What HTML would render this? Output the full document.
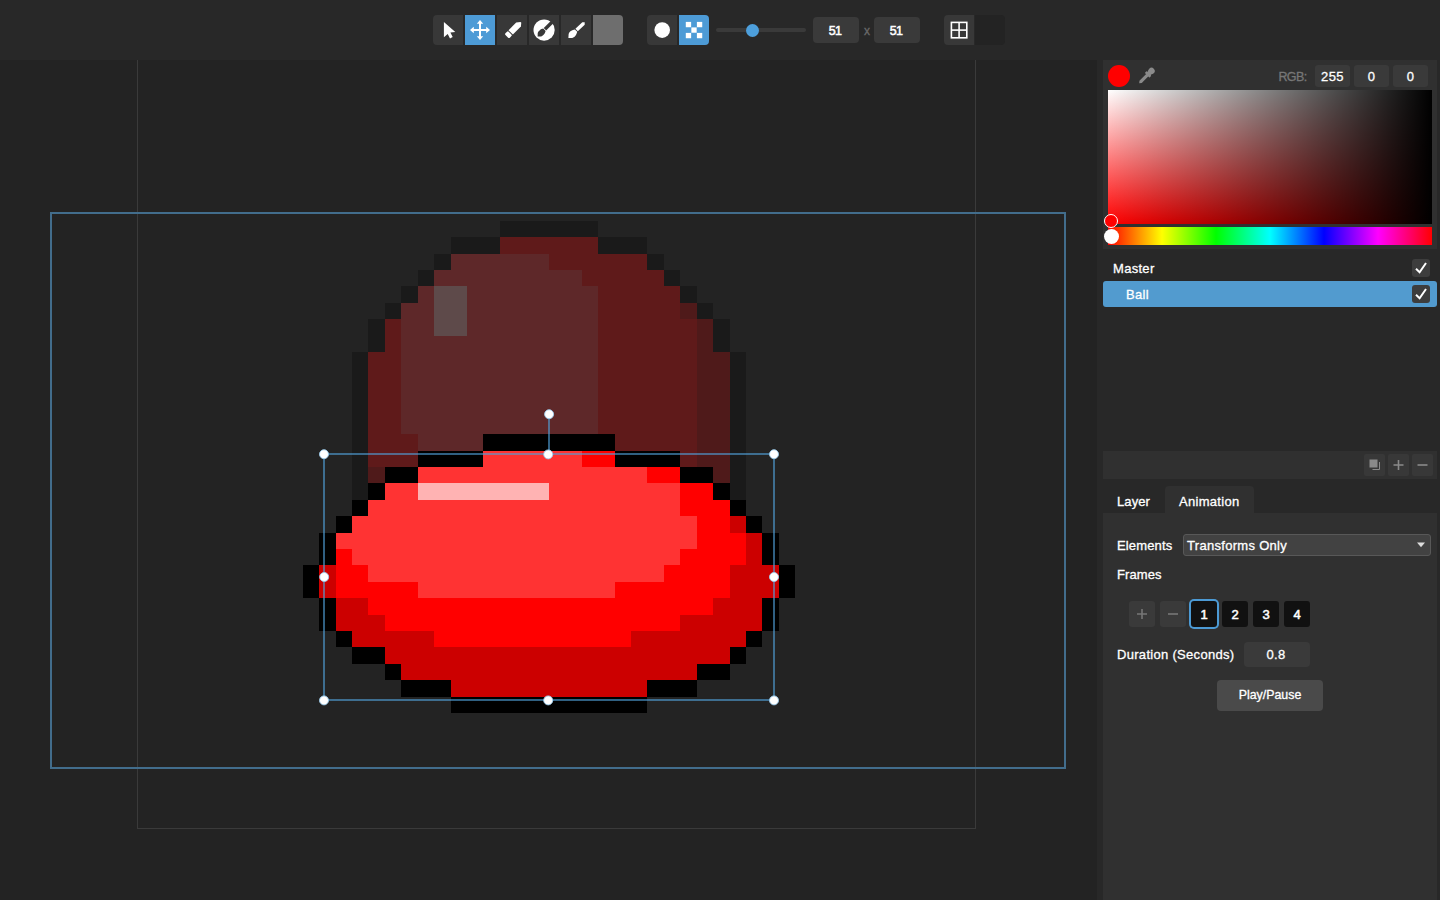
<!DOCTYPE html>
<html lang="en">
<head>
<meta charset="utf-8">
<title>Pixel Editor</title>
<style>
*{box-sizing:border-box;margin:0;padding:0}
html,body{width:1440px;height:900px;overflow:hidden;background:#282828}
body{position:relative;font-family:"Liberation Sans",sans-serif;font-size:13px;color:#fff;-webkit-font-smoothing:antialiased}
.abs{position:absolute}
#stage{position:absolute;left:0;top:60px;width:1097px;height:840px;background:#232323;overflow:hidden}
#stage svg{position:absolute;left:0;top:0}
/* top toolbar */
.tb{position:absolute;top:15px;width:30px;height:30px;background:#383838}
.tb.on{background:#4d9bd6}
.tb svg{position:absolute;left:0;top:0}
.num{position:absolute;top:17px;height:26px;width:46px;background:#3a3a3a;border-radius:4px;text-align:center;line-height:28px;font-size:12.5px;letter-spacing:-0.6px;padding-right:2px;color:#fff;-webkit-text-stroke:0.5px #fff}
/* right panel */
.pn{position:absolute;left:1103px;width:334px;background:#303030}
.rgb{position:absolute;top:65px;width:35px;height:22px;background:#3a3a3a;border-radius:3px;text-align:center;line-height:23px;font-size:13px;letter-spacing:0.4px;color:#fff;-webkit-text-stroke:0.3px #fff}
.cb{position:absolute;left:1412px;width:18px;height:18px;background:#3d3d3d;border-radius:3px}
.lb{position:absolute;line-height:16px;white-space:nowrap;letter-spacing:0.3px;-webkit-text-stroke:0.3px currentColor}
.sb{position:absolute;top:454px;width:21px;height:22px;background:#383838;border-radius:2px}
.fb{position:absolute;top:601px;width:26px;height:26px;border-radius:3px;background:#111;text-align:center;line-height:27.5px;font-size:13px;color:#fff;-webkit-text-stroke:0.55px #fff}
.fb svg,.sb svg,.cb svg{display:block}
.fb.dis{background:#3a3a3a;color:#777}
</style>
</head>
<body>

<!-- ======= canvas stage ======= -->
<div id="stage">
<svg width="1097" height="840" viewBox="0 60 1097 840">
  <g shape-rendering="crispEdges">
  <rect x="137.5" y="-9.5" width="838" height="838" fill="none" stroke="#3a3a3a" stroke-width="1"/>
<rect x="500" y="221" width="98" height="16" fill="#1a1a1a"/>
<rect x="451" y="237" width="49" height="17" fill="#1a1a1a"/>
<rect x="500" y="237" width="98" height="17" fill="#5f1a1a"/>
<rect x="598" y="237" width="49" height="17" fill="#1a1a1a"/>
<rect x="434" y="254" width="17" height="16" fill="#1a1a1a"/>
<rect x="451" y="254" width="98" height="16" fill="#5e2829"/>
<rect x="549" y="254" width="98" height="16" fill="#5f1a1a"/>
<rect x="647" y="254" width="17" height="16" fill="#1a1a1a"/>
<rect x="418" y="270" width="16" height="16" fill="#1a1a1a"/>
<rect x="434" y="270" width="148" height="16" fill="#5e2829"/>
<rect x="582" y="270" width="82" height="16" fill="#5f1a1a"/>
<rect x="664" y="270" width="16" height="16" fill="#1a1a1a"/>
<rect x="401" y="286" width="17" height="17" fill="#1a1a1a"/>
<rect x="418" y="286" width="16" height="17" fill="#5e2829"/>
<rect x="434" y="286" width="33" height="17" fill="#5e4a4a"/>
<rect x="467" y="286" width="131" height="17" fill="#5e2829"/>
<rect x="598" y="286" width="82" height="17" fill="#5f1a1a"/>
<rect x="680" y="286" width="17" height="17" fill="#1a1a1a"/>
<rect x="385" y="303" width="16" height="16" fill="#1a1a1a"/>
<rect x="401" y="303" width="33" height="16" fill="#5e2829"/>
<rect x="434" y="303" width="33" height="16" fill="#5e4a4a"/>
<rect x="467" y="303" width="131" height="16" fill="#5e2829"/>
<rect x="598" y="303" width="82" height="16" fill="#5f1a1a"/>
<rect x="680" y="303" width="17" height="16" fill="#4f1a1a"/>
<rect x="697" y="303" width="16" height="16" fill="#1a1a1a"/>
<rect x="368" y="319" width="17" height="17" fill="#1a1a1a"/>
<rect x="385" y="319" width="16" height="17" fill="#5f1a1a"/>
<rect x="401" y="319" width="33" height="17" fill="#5e2829"/>
<rect x="434" y="319" width="33" height="17" fill="#5e4a4a"/>
<rect x="467" y="319" width="131" height="17" fill="#5e2829"/>
<rect x="598" y="319" width="99" height="17" fill="#5f1a1a"/>
<rect x="697" y="319" width="16" height="17" fill="#4f1a1a"/>
<rect x="713" y="319" width="17" height="17" fill="#1a1a1a"/>
<rect x="368" y="336" width="17" height="16" fill="#1a1a1a"/>
<rect x="385" y="336" width="16" height="16" fill="#5f1a1a"/>
<rect x="401" y="336" width="197" height="16" fill="#5e2829"/>
<rect x="598" y="336" width="99" height="16" fill="#5f1a1a"/>
<rect x="697" y="336" width="16" height="16" fill="#4f1a1a"/>
<rect x="713" y="336" width="17" height="16" fill="#1a1a1a"/>
<rect x="352" y="352" width="16" height="16" fill="#1a1a1a"/>
<rect x="368" y="352" width="33" height="16" fill="#5f1a1a"/>
<rect x="401" y="352" width="197" height="16" fill="#5e2829"/>
<rect x="598" y="352" width="99" height="16" fill="#5f1a1a"/>
<rect x="697" y="352" width="33" height="16" fill="#4f1a1a"/>
<rect x="730" y="352" width="16" height="16" fill="#1a1a1a"/>
<rect x="352" y="368" width="16" height="17" fill="#1a1a1a"/>
<rect x="368" y="368" width="33" height="17" fill="#5f1a1a"/>
<rect x="401" y="368" width="197" height="17" fill="#5e2829"/>
<rect x="598" y="368" width="99" height="17" fill="#5f1a1a"/>
<rect x="697" y="368" width="33" height="17" fill="#4f1a1a"/>
<rect x="730" y="368" width="16" height="17" fill="#1a1a1a"/>
<rect x="352" y="385" width="16" height="16" fill="#1a1a1a"/>
<rect x="368" y="385" width="33" height="16" fill="#5f1a1a"/>
<rect x="401" y="385" width="197" height="16" fill="#5e2829"/>
<rect x="598" y="385" width="99" height="16" fill="#5f1a1a"/>
<rect x="697" y="385" width="33" height="16" fill="#4f1a1a"/>
<rect x="730" y="385" width="16" height="16" fill="#1a1a1a"/>
<rect x="352" y="401" width="16" height="17" fill="#1a1a1a"/>
<rect x="368" y="401" width="33" height="17" fill="#5f1a1a"/>
<rect x="401" y="401" width="197" height="17" fill="#5e2829"/>
<rect x="598" y="401" width="99" height="17" fill="#5f1a1a"/>
<rect x="697" y="401" width="33" height="17" fill="#4f1a1a"/>
<rect x="730" y="401" width="16" height="17" fill="#1a1a1a"/>
<rect x="352" y="418" width="16" height="16" fill="#1a1a1a"/>
<rect x="368" y="418" width="33" height="16" fill="#5f1a1a"/>
<rect x="401" y="418" width="197" height="16" fill="#5e2829"/>
<rect x="598" y="418" width="99" height="16" fill="#5f1a1a"/>
<rect x="697" y="418" width="33" height="16" fill="#4f1a1a"/>
<rect x="730" y="418" width="16" height="16" fill="#1a1a1a"/>
<rect x="352" y="434" width="16" height="17" fill="#1a1a1a"/>
<rect x="368" y="434" width="50" height="17" fill="#5f1a1a"/>
<rect x="418" y="434" width="65" height="17" fill="#5e2829"/>
<rect x="483" y="434" width="132" height="17" fill="#000000"/>
<rect x="615" y="434" width="82" height="17" fill="#5f1a1a"/>
<rect x="697" y="434" width="33" height="17" fill="#4f1a1a"/>
<rect x="730" y="434" width="16" height="17" fill="#1a1a1a"/>
<rect x="352" y="451" width="16" height="16" fill="#1a1a1a"/>
<rect x="368" y="451" width="50" height="16" fill="#5f1a1a"/>
<rect x="418" y="451" width="65" height="16" fill="#000000"/>
<rect x="483" y="451" width="99" height="16" fill="#ff3333"/>
<rect x="582" y="451" width="33" height="16" fill="#ff0000"/>
<rect x="615" y="451" width="65" height="16" fill="#000000"/>
<rect x="680" y="451" width="17" height="16" fill="#5f1a1a"/>
<rect x="697" y="451" width="33" height="16" fill="#4f1a1a"/>
<rect x="730" y="451" width="16" height="16" fill="#1a1a1a"/>
<rect x="352" y="467" width="16" height="16" fill="#1a1a1a"/>
<rect x="368" y="467" width="17" height="16" fill="#4f1a1a"/>
<rect x="385" y="467" width="33" height="16" fill="#000000"/>
<rect x="418" y="467" width="229" height="16" fill="#ff3333"/>
<rect x="647" y="467" width="33" height="16" fill="#ff0000"/>
<rect x="680" y="467" width="33" height="16" fill="#000000"/>
<rect x="713" y="467" width="17" height="16" fill="#4f1a1a"/>
<rect x="730" y="467" width="16" height="16" fill="#1a1a1a"/>
<rect x="352" y="483" width="16" height="17" fill="#1a1a1a"/>
<rect x="368" y="483" width="17" height="17" fill="#000000"/>
<rect x="385" y="483" width="33" height="17" fill="#ff3333"/>
<rect x="418" y="483" width="131" height="17" fill="#ffb3b3"/>
<rect x="549" y="483" width="131" height="17" fill="#ff3333"/>
<rect x="680" y="483" width="33" height="17" fill="#ff0000"/>
<rect x="713" y="483" width="17" height="17" fill="#000000"/>
<rect x="730" y="483" width="16" height="17" fill="#1a1a1a"/>
<rect x="352" y="500" width="16" height="16" fill="#000000"/>
<rect x="368" y="500" width="312" height="16" fill="#ff3333"/>
<rect x="680" y="500" width="50" height="16" fill="#ff0000"/>
<rect x="730" y="500" width="16" height="16" fill="#000000"/>
<rect x="336" y="516" width="16" height="17" fill="#000000"/>
<rect x="352" y="516" width="345" height="17" fill="#ff3333"/>
<rect x="697" y="516" width="33" height="17" fill="#ff0000"/>
<rect x="730" y="516" width="16" height="17" fill="#cc0000"/>
<rect x="746" y="516" width="16" height="17" fill="#000000"/>
<rect x="319" y="533" width="17" height="16" fill="#000000"/>
<rect x="336" y="533" width="361" height="16" fill="#ff3333"/>
<rect x="697" y="533" width="49" height="16" fill="#ff0000"/>
<rect x="746" y="533" width="16" height="16" fill="#cc0000"/>
<rect x="762" y="533" width="17" height="16" fill="#000000"/>
<rect x="319" y="549" width="17" height="16" fill="#000000"/>
<rect x="336" y="549" width="16" height="16" fill="#ff0000"/>
<rect x="352" y="549" width="328" height="16" fill="#ff3333"/>
<rect x="680" y="549" width="66" height="16" fill="#ff0000"/>
<rect x="746" y="549" width="16" height="16" fill="#cc0000"/>
<rect x="762" y="549" width="17" height="16" fill="#000000"/>
<rect x="303" y="565" width="16" height="17" fill="#000000"/>
<rect x="319" y="565" width="17" height="17" fill="#cc0000"/>
<rect x="336" y="565" width="32" height="17" fill="#ff0000"/>
<rect x="368" y="565" width="296" height="17" fill="#ff3333"/>
<rect x="664" y="565" width="66" height="17" fill="#ff0000"/>
<rect x="730" y="565" width="49" height="17" fill="#cc0000"/>
<rect x="779" y="565" width="16" height="17" fill="#000000"/>
<rect x="303" y="582" width="16" height="16" fill="#000000"/>
<rect x="319" y="582" width="17" height="16" fill="#cc0000"/>
<rect x="336" y="582" width="82" height="16" fill="#ff0000"/>
<rect x="418" y="582" width="197" height="16" fill="#ff3333"/>
<rect x="615" y="582" width="115" height="16" fill="#ff0000"/>
<rect x="730" y="582" width="49" height="16" fill="#cc0000"/>
<rect x="779" y="582" width="16" height="16" fill="#000000"/>
<rect x="319" y="598" width="17" height="17" fill="#000000"/>
<rect x="336" y="598" width="32" height="17" fill="#cc0000"/>
<rect x="368" y="598" width="345" height="17" fill="#ff0000"/>
<rect x="713" y="598" width="49" height="17" fill="#cc0000"/>
<rect x="762" y="598" width="17" height="17" fill="#000000"/>
<rect x="319" y="615" width="17" height="16" fill="#000000"/>
<rect x="336" y="615" width="49" height="16" fill="#cc0000"/>
<rect x="385" y="615" width="295" height="16" fill="#ff0000"/>
<rect x="680" y="615" width="82" height="16" fill="#cc0000"/>
<rect x="762" y="615" width="17" height="16" fill="#000000"/>
<rect x="336" y="631" width="16" height="16" fill="#000000"/>
<rect x="352" y="631" width="82" height="16" fill="#cc0000"/>
<rect x="434" y="631" width="197" height="16" fill="#ff0000"/>
<rect x="631" y="631" width="115" height="16" fill="#cc0000"/>
<rect x="746" y="631" width="16" height="16" fill="#000000"/>
<rect x="352" y="647" width="33" height="17" fill="#000000"/>
<rect x="385" y="647" width="345" height="17" fill="#cc0000"/>
<rect x="730" y="647" width="16" height="17" fill="#000000"/>
<rect x="385" y="664" width="16" height="16" fill="#000000"/>
<rect x="401" y="664" width="296" height="16" fill="#cc0000"/>
<rect x="697" y="664" width="33" height="16" fill="#000000"/>
<rect x="401" y="680" width="50" height="17" fill="#000000"/>
<rect x="451" y="680" width="196" height="17" fill="#cc0000"/>
<rect x="647" y="680" width="50" height="17" fill="#000000"/>
<rect x="451" y="697" width="196" height="16" fill="#000000"/>
  </g>
  <!-- viewport frame -->
  <rect x="51" y="213" width="1014" height="555" fill="none" stroke="#426d8c" stroke-width="2" shape-rendering="crispEdges"/>
  <!-- transform box -->
  <g stroke="rgba(80,160,216,0.6)" stroke-width="2" fill="none" shape-rendering="crispEdges">
    <rect x="324" y="454" width="450" height="246"/>
    <line x1="549" y1="414" x2="549" y2="453"/>
  </g>
  <g fill="#fff" stroke="#9ccdee" stroke-width="0.9">
    <circle cx="324" cy="454.2" r="4.5"/><circle cx="548.2" cy="454.4" r="4.5"/><circle cx="774" cy="454.2" r="4.5"/>
    <circle cx="324.2" cy="577" r="4.5"/><circle cx="774" cy="577" r="4.5"/>
    <circle cx="324" cy="700.4" r="4.5"/><circle cx="548.2" cy="700.4" r="4.5"/><circle cx="774" cy="700.4" r="4.5"/>
    <circle cx="549.1" cy="414.2" r="4.5"/>
  </g>
</svg>
</div>

<!-- ======= top toolbar ======= -->
<div class="tb" style="left:433px;border-radius:4px 0 0 4px">
  <svg width="30" height="30" viewBox="433 15 30 30"><path d="M443.9 21.9 L443.9 37.3 L447.7 33.9 L450 38.4 L452.7 37 L450.4 32.6 L455.3 32 Z" fill="#fff"/></svg>
</div>
<div class="tb on" style="left:465px">
  <svg width="30" height="30" viewBox="465 15 30 30"><g fill="#fff"><rect x="479" y="22" width="2" height="16"/><rect x="472" y="29" width="16" height="2"/><path d="M480 20 L483.2 23.8 H476.8 Z"/><path d="M480 40 L483.2 36.2 H476.8 Z"/><path d="M470 30 L473.8 26.8 V33.2 Z"/><path d="M490 30 L486.2 26.8 V33.2 Z"/></g></svg>
</div>
<div class="tb" style="left:497px">
  <svg width="30" height="30" viewBox="497 15 30 30"><g fill="#fff" transform="translate(506.8 36.3) rotate(-45)"><rect x="0" y="-3.1" width="4.6" height="6.2" rx="1.2"/><path d="M5.5 -3.1 H16.4 L19.9 -0.4 L19.9 0.6 L16.8 3.1 H5.5 Z"/></g></svg>
</div>
<div class="tb" style="left:529px">
  <svg width="30" height="30" viewBox="529 15 30 30"><circle cx="544.1" cy="30.1" r="10.6" fill="#fff"/><g transform="translate(537.6 36.6) rotate(-45)" fill="#383838"><path d="M0 0 L2.6 -2.4 C3.8 -3.1 4.8 -3.2 5.8 -3 C7.4 -2.8 8.8 -2.2 9.6 -1.7 V1.7 C8.8 2.2 7.4 2.8 5.8 3 C4.8 3.2 3.8 3.1 2.6 2.4 Z"/><rect x="10.4" y="-1.7" width="12" height="3.4"/></g></svg>
</div>
<div class="tb" style="left:561px">
  <svg width="30" height="30" viewBox="561 15 30 30"><g transform="translate(568.4 38) rotate(-44)" fill="#fff"><path d="M0 0 L2.8 -2.6 C4.2 -3.4 5.4 -3.5 6.6 -3.3 C8.2 -3.1 9.8 -2.3 10.6 -1.7 V1.7 C9.8 2.3 8.2 3.1 6.6 3.3 C5.4 3.5 4.2 3.4 2.8 2.6 Z"/><path d="M11.4 -1.7 H21 L22.6 0 L21 1.7 H11.4 Z"/></g></svg>
</div>
<div class="tb" style="left:593px;background:#6e6e6e;border-radius:0 4px 4px 0"></div>

<div class="tb" style="left:647px;border-radius:4px 0 0 4px">
  <svg width="30" height="30" viewBox="647 15 30 30"><circle cx="662.2" cy="30.1" r="7.8" fill="#fff"/></svg>
</div>
<div class="tb on" style="left:679px;border-radius:0 4px 4px 0">
  <svg width="30" height="30" viewBox="679 15 30 30"><g fill="#fff"><rect x="685.8" y="21.9" width="5.33" height="5.33"/><rect x="696.9" y="21.9" width="5.33" height="5.33"/><rect x="691.35" y="27.4" width="5.33" height="5.33"/><rect x="685.8" y="32.9" width="5.33" height="5.33"/><rect x="696.9" y="32.9" width="5.33" height="5.33"/></g></svg>
</div>

<div class="abs" style="left:716px;top:28px;width:90px;height:4px;border-radius:2px;background:#3a3a3a"></div>
<div class="abs" style="left:746px;top:23.5px;width:13px;height:13px;border-radius:50%;background:#4d9fdc"></div>

<div class="num" style="left:813px">51</div>
<div class="lb" style="left:864px;top:22.5px;color:#6a6a6a;font-size:12px;letter-spacing:0">x</div>
<div class="num" style="left:874px">51</div>

<div class="tb" style="left:944px;border-radius:4px 0 0 4px">
  <svg width="30" height="30" viewBox="944 15 30 30"><g fill="none" stroke="#fff" stroke-width="1.6"><rect x="951.4" y="22.4" width="15.4" height="15.4"/><line x1="959.1" y1="22.4" x2="959.1" y2="37.8"/><line x1="951.4" y1="30.1" x2="966.8" y2="30.1"/></g></svg>
</div>
<div class="tb" style="left:975px;background:#232323;border-radius:0 4px 4px 0"></div>

<!-- ======= right panel ======= -->
<!-- colour picker -->
<div class="pn" style="top:60px;height:189px"></div>
<div class="abs" style="left:1108px;top:65px;width:22px;height:22px;border-radius:50%;background:#ff0000"></div>
<svg class="abs" style="left:1136px;top:65px" width="22" height="22" viewBox="1136 65 22 22"><g transform="translate(1139.2 83.2) rotate(-45)" fill="#8a8a8a"><path d="M0 0 L2 -1.6 H12.5 V1.6 H2 Z"/><rect x="11.2" y="-3.3" width="2.6" height="6.6" rx="0.6"/><rect x="13" y="-2.3" width="4" height="4.6"/><circle cx="17.4" cy="0" r="3.2"/></g></svg>
<div class="lb" style="left:1278.4px;top:69px;color:#777;font-size:12.5px;letter-spacing:-0.6px">RGB:</div>
<div class="rgb" style="left:1315px">255</div>
<div class="rgb" style="left:1354px">0</div>
<div class="rgb" style="left:1393px">0</div>
<div class="abs" style="left:1108px;top:90px;width:324px;height:134px;background:linear-gradient(to right,rgba(0,0,0,0),#000),linear-gradient(to bottom,#fff,#f00)"></div>
<div class="abs" style="left:1108px;top:227px;width:324px;height:18px;background:linear-gradient(to right,#f00 0%,#ff0 16.67%,#0f0 33.33%,#0ff 50%,#00f 66.67%,#f0f 83.33%,#f00 100%)"></div>
<div class="abs" style="left:1104px;top:214px;width:14px;height:14px;border-radius:50%;background:#ff0000;border:1px solid #fff"></div>
<div class="abs" style="left:1103.5px;top:229px;width:15px;height:15px;border-radius:50%;background:#fff"></div>

<!-- layers -->
<div class="lb" style="left:1113px;top:261px">Master</div>
<div class="cb" style="top:259px"><svg width="18" height="18" viewBox="0 0 18 18"><path d="M4 9.8 L7.6 13.2 L14 4" fill="none" stroke="#fff" stroke-width="2"/></svg></div>
<div class="abs" style="left:1103px;top:281px;width:334px;height:26px;background:#529bcf;border-radius:3px"></div>
<div class="lb" style="left:1126px;top:287px">Ball</div>
<div class="cb" style="top:285px"><svg width="18" height="18" viewBox="0 0 18 18"><path d="M4 9.8 L7.6 13.2 L14 4" fill="none" stroke="#fff" stroke-width="2"/></svg></div>

<!-- layer toolbar -->
<div class="pn" style="top:451px;height:28px"></div>
<div class="sb" style="left:1364px"><svg width="21" height="22" viewBox="0 0 21 22"><rect x="5.5" y="5.5" width="8" height="8" fill="#8a8a8a"/><path d="M8.5 15.5 H15.5 V8" fill="none" stroke="#8a8a8a" stroke-width="1"/></svg></div>
<div class="sb" style="left:1388px"><svg width="21" height="22" viewBox="0 0 21 22"><path d="M5.5 11 H15.5 M10.5 6 V16" stroke="#8a8a8a" stroke-width="1.6" fill="none"/></svg></div>
<div class="sb" style="left:1412px"><svg width="21" height="22" viewBox="0 0 21 22"><path d="M5.5 11 H15.5" stroke="#8a8a8a" stroke-width="1.6" fill="none"/></svg></div>

<!-- tabs -->
<div class="abs" style="left:1165px;top:486px;width:89px;height:28px;background:#303030;border-radius:4px 4px 0 0"></div>
<div class="pn" style="top:513px;height:387px"></div>
<div class="lb" style="left:1117px;top:494px;letter-spacing:0.1px">Layer</div>
<div class="lb" style="left:1179px;top:494px">Animation</div>

<div class="lb" style="left:1117px;top:538px;letter-spacing:0.15px">Elements</div>
<div class="abs" style="left:1183px;top:534px;width:248px;height:22px;background:#424242;border:1px solid #585858;border-radius:3px"></div>
<div class="lb" style="left:1187px;top:538px">Transforms Only</div>
<svg class="abs" style="left:1416px;top:542px" width="10" height="6" viewBox="0 0 10 6"><path d="M1 0.5 H9 L5 5.2 Z" fill="#ddd"/></svg>

<div class="lb" style="left:1117px;top:567px;letter-spacing:0.1px">Frames</div>
<div class="fb dis" style="left:1129px"><svg width="26" height="26" viewBox="0 0 26 26"><path d="M8 13 H18 M13 8 V18" stroke="#777" stroke-width="1.6" fill="none"/></svg></div>
<div class="fb dis" style="left:1160px"><svg width="26" height="26" viewBox="0 0 26 26"><path d="M8 13 H18" stroke="#777" stroke-width="1.6" fill="none"/></svg></div>
<div class="fb" style="left:1191px;box-shadow:0 0 0 2px #4c9ad4">1</div>
<div class="fb" style="left:1222px">2</div>
<div class="fb" style="left:1253px">3</div>
<div class="fb" style="left:1284px">4</div>

<div class="lb" style="left:1117px;top:646.5px">Duration (Seconds)</div>
<div class="abs" style="left:1244px;top:642px;width:66px;height:25px;background:#3a3a3a;border-radius:4px;text-align:center;line-height:25px;letter-spacing:0.3px;padding-right:2px;-webkit-text-stroke:0.3px #fff">0.8</div>
<div class="abs" style="left:1217px;top:680px;width:106px;height:31px;background:#4a4a4a;border-radius:4px;text-align:center;line-height:31px;font-size:12.4px;-webkit-text-stroke:0.3px #fff">Play/Pause</div>

</body>
</html>
